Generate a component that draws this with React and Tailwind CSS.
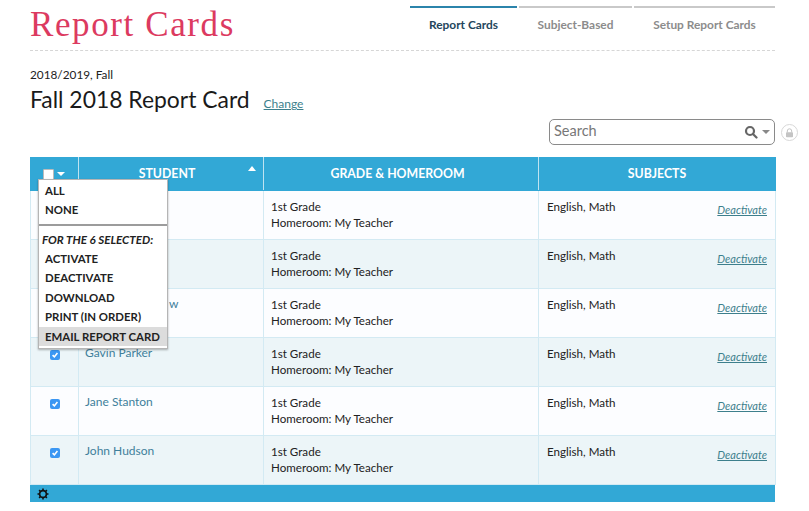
import React from "react";

const students = [
  ["", "bg-[#fcfdff]"],
  ["", "bg-[#ecf5f8]"],
  ["w", "bg-[#fcfdff]"],
  ["Gavin Parker", "bg-[#ecf5f8]"],
  ["Jane Stanton", "bg-[#fcfdff]"],
  ["John Hudson", "bg-[#ecf5f8]"],
];

function Check() {
  return (
    <span className="inline-flex w-[10px] h-[10px] rounded-[2px] bg-[#3b97f3] items-center justify-center">
      <svg width="8" height="8" viewBox="0 0 10 10" fill="none" stroke="white" strokeWidth="2">
        <path d="M2 5.2 L4.2 7.4 L8 2.6" />
      </svg>
    </span>
  );
}

function Tab({ label, active, width }) {
  return (
    <div className={`${width} h-[44px] border-t-2 ${active ? "border-[#2b84ab] text-[#24465c]" : "border-[#c9c9c9] text-[#8c8c8c]"} text-center pt-[8px] text-[11.9px] font-bold`}>
      {label}
    </div>
  );
}

function MenuItem({ children, hi }) {
  return (
    <div className={`h-[19.4px] pl-[6px] leading-[19px] text-[11.4px] font-bold text-[#222] ${hi ? "bg-[#dcdcdc]" : ""}`}>{children}</div>
  );
}

export default function App() {
  return (
    <div className="w-[809px] h-[511px] bg-white overflow-hidden pl-[30px] font-['Lato','Liberation_Sans',sans-serif]">
      <div className="w-[745px] h-[51px] flex justify-between border-b border-dashed border-[#d6d6d6]">
        <div className="font-['Liberation_Serif',serif] text-[35px] leading-[49px] text-[#dc3a60] tracking-[1.6px]">Report Cards</div>
        <div className="flex gap-[2px] pt-[6px]">
          <Tab label="Report Cards" active width="w-[107px]" />
          <Tab label="Subject-Based" width="w-[113px]" />
          <Tab label="Setup Report Cards" width="w-[141px]" />
        </div>
      </div>

      <div className="mt-[16px] text-[11.8px] leading-[16px] text-[#222]">2018/2019, Fall</div>
      <div className="flex items-baseline mt-[3px] h-[26px]">
        <div className="text-[22.9px] leading-[26px] text-[#1a1a1a]">Fall 2018 Report Card</div>
        <a className="ml-[14px] text-[12px] text-[#3d7f8c] underline">Change</a>
      </div>

      <div className="w-[745px] flex justify-end mt-[7px] relative">
        <div className="w-[226px] h-[26px] border border-[#8a8a8a] rounded-[5px] flex items-center pl-[4px] pr-[4px] text-[14.5px] text-[#777]">
          <span className="flex-1 -translate-y-[1px]">Search</span>
          <svg width="14" height="14" viewBox="0 0 14 14" fill="none" stroke="#666" strokeWidth="2.2">
            <circle cx="6" cy="6" r="4" />
            <path d="M9 9 L12.5 12.5" strokeLinecap="round" />
          </svg>
          <span className="ml-[4px] w-0 h-0 border-x-[4px] border-x-transparent border-t-[4px] border-t-[#888]" />
        </div>
        <span className="absolute left-[751px] top-[5px] w-[17px] h-[17px] rounded-full border border-[#d8d8d8] flex items-center justify-center">
          <svg width="9" height="10" viewBox="0 0 9 10" fill="none">
            <path d="M2.3 4.5 V3 a2.2 2.2 0 0 1 4.4 0 V4.5" stroke="#c4c4c4" strokeWidth="1" />
            <rect x="1" y="4.3" width="7" height="5" rx="0.8" fill="#c4c4c4" />
          </svg>
        </span>
      </div>

      <div className="relative mt-[12px] w-[745px]">
        <table className="w-[745px] table-fixed border-collapse">
          <colgroup>
            <col className="w-[48px]" />
            <col className="w-[185px]" />
            <col className="w-[275px]" />
            <col className="w-[237px]" />
          </colgroup>
          <thead>
            <tr className="h-[33px] bg-[#32a8d6] text-white text-[12.3px] font-bold">
              <th className="border border-[#32a8d6] border-r-[#bfe3f1]">
                <div className="flex items-center pl-[12px] gap-[3px]">
                  <span className="w-[11px] h-[11px] bg-white rounded-[1px] border border-[#bbb]" />
                  <span className="w-0 h-0 border-x-[4px] border-x-transparent border-t-[4px] border-t-white" />
                </div>
              </th>
              <th className="relative border border-[#32a8d6] border-r-[#bfe3f1] font-bold pr-[8px]">
                STUDENT
                <span className="absolute right-[7px] top-[8px] w-0 h-0 border-x-[4px] border-x-transparent border-b-[5px] border-b-white" />
              </th>
              <th className="border border-[#32a8d6] border-r-[#bfe3f1] font-bold pr-[7px]">GRADE &amp; HOMEROOM</th>
              <th className="border border-[#32a8d6] font-bold">SUBJECTS</th>
            </tr>
          </thead>
          <tbody>
            {students.map(([name, bg], i) => (
              <tr key={i} className={`h-[49px] ${bg} text-[11.6px] text-[#222]`}>
                <td className="border border-[#d3eaf3] align-top pt-[11px] text-center leading-none"><Check /></td>
                <td className={`border border-[#d3eaf3] align-top pt-[7px] leading-[16px] text-[12px] text-[#3f7f9b] ${name === "w" ? "pl-[90px]" : "pl-[6px]"}`}>{name}</td>
                <td className="border border-[#d3eaf3] align-top pl-[7px] pt-[8px] leading-[16px]">
                  <div>1st Grade</div>
                  <div>Homeroom: My Teacher</div>
                </td>
                <td className="border border-[#d3eaf3] align-top pl-[8px] pr-[8px] pt-[8px] leading-[16px]">
                  <div className="flex justify-between">
                    <span>English, Math</span>
                    <a className="mt-[3px] italic text-[11px] text-[#3d7f8c] underline">Deactivate</a>
                  </div>
                </td>
              </tr>
            ))}
          </tbody>
        </table>
        <div className="h-[17px] bg-[#32a8d6] flex items-center pl-[7px]">
          <svg width="12" height="12" viewBox="0 0 12 12" fill="none" stroke="#111">
            <circle cx="6" cy="6" r="3.4" strokeWidth="1.7" />
            <path d="M6 0.5V2.5M6 9.5V11.5M0.5 6H2.5M9.5 6H11.5M2.1 2.1L3.5 3.5M8.5 8.5L9.9 9.9M2.1 9.9L3.5 8.5M8.5 3.5L9.9 2.1" strokeWidth="1.6" />
          </svg>
        </div>

        <div className="absolute left-[8px] top-[22px] w-[130px] h-[170px] bg-white border border-[#b5b5b5] shadow-[0_1px_2px_rgba(0,0,0,0.3)]">
          <div className="pt-[1px] h-[44px]">
            <MenuItem>ALL</MenuItem>
            <MenuItem>NONE</MenuItem>
          </div>
          <div className="border-t-2 border-[#9c9c9c]" />
          <div className="mt-[6px] pl-[3px] text-[11.6px] leading-[16px] italic font-bold text-[#222]">FOR THE 6 SELECTED:</div>
          <div className="mt-[1px]">
            <MenuItem>ACTIVATE</MenuItem>
            <MenuItem>DEACTIVATE</MenuItem>
            <MenuItem>DOWNLOAD</MenuItem>
            <MenuItem>PRINT (IN ORDER)</MenuItem>
            <MenuItem hi>EMAIL REPORT CARD</MenuItem>
          </div>
        </div>
      </div>
    </div>
  );
}
